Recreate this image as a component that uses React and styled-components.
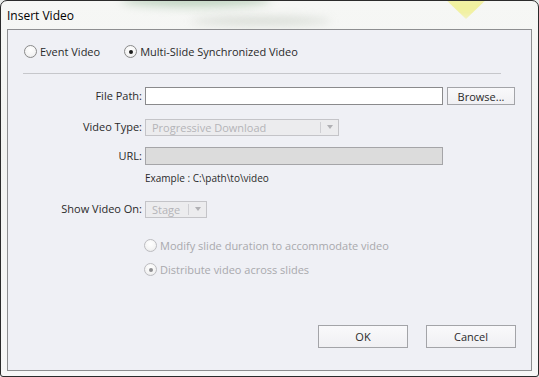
import React from 'react'
import styled, { createGlobalStyle } from 'styled-components'

const Global = createGlobalStyle`
  html, body { margin: 0; padding: 0; background: #e9ecea; }
  body { font-family: "Open Sans", "Noto Sans", sans-serif; }
`;

const Frame = styled.div`
  position: relative;
  width: 539px;
  height: 377px;
  box-sizing: border-box;
  border: 1px solid #2b2b2b;
  border-radius: 7px 7px 3px 3px;
  background: linear-gradient(180deg, #f6f7f5 0%, #f2f3f1 40%, #f7f7f7 100%);
  overflow: hidden;
  display: flex;
  flex-direction: column;
`;

const Blur = styled.div`
  position: absolute;
  filter: blur(${({ $blur }) => $blur || 6}px);
  pointer-events: none;
`;

const TitleBar = styled.div`
  position: relative;
  height: 28px;
  padding-left: 6px;
  display: flex;
  align-items: center;
  font-family: "Open Sans", "Noto Sans", sans-serif;
  font-size: 12px;
  color: #000;
`;

const Client = styled.div`
  position: relative;
  flex: 1;
  margin: 0 6px 5px 6px;
  border: 1px solid #8d8e90;
  background: #eff0f5;
  display: flex;
  flex-direction: column;
  font-size: 11px;
  color: #2a2a2a;
`;

const TopRadios = styled.div`
  display: flex;
  gap: 24px;
  padding: 14px 0 0 16px;
  height: 15px;
`;

const RadioLabel = styled.label`
  display: inline-flex;
  align-items: center;
  gap: 3px;
  color: ${({ $disabled }) => ($disabled ? '#a9a9ad' : '#2a2a2a')};
  white-space: nowrap;
`;

const RadioDot = styled.span`
  width: 11px;
  height: 11px;
  border-radius: 50%;
  border: 1px solid ${({ $disabled }) => ($disabled ? '#bcbcc0' : '#8a8a8a')};
  background: radial-gradient(circle at 50% 35%, #ffffff 0%, #f4f4f4 60%, #e2e2e4 100%);
  display: inline-flex;
  align-items: center;
  justify-content: center;
  &::after {
    content: '';
    width: 4px;
    height: 4px;
    border-radius: 50%;
    background: ${({ $disabled }) => ($disabled ? '#8f8f92' : '#1d1d1d')};
    display: ${({ $checked }) => ($checked ? 'block' : 'none')};
  }
`;

const Separator = styled.hr`
  margin: 14px 30px 0 15px;
  border: 0;
  border-top: 1px solid #c6c7cb;
  height: 0;
`;

const Form = styled.div`
  display: grid;
  grid-template-columns: 134px 1fr;
  column-gap: 3px;
  align-items: center;
  margin-top: 13px;
  padding-right: 15px;
`;

const Label = styled.div`
  text-align: right;
  height: 18px;
  line-height: 18px;
  margin-bottom: ${({ $mb }) => $mb ?? 13}px;
`;

const Field = styled.div`
  display: flex;
  align-items: center;
  gap: 4px;
  height: 18px;
  margin-bottom: ${({ $mb }) => $mb ?? 13}px;
`;

const TextBox = styled.div`
  width: ${({ $w }) => $w}px;
  height: 18px;
  box-sizing: border-box;
  border: 1px solid ${({ $disabled }) => ($disabled ? '#a5a5a8' : '#8a8a8c')};
  background: ${({ $disabled }) => ($disabled ? '#dcdcdc' : '#ffffff')};
`;

const Button = styled.button`
  width: ${({ $w }) => $w}px;
  height: ${({ $h }) => $h || 18}px;
  box-sizing: border-box;
  border: 1px solid #a3a4a8;
  background: linear-gradient(180deg, #f9f9fb 0%, #f0f0f3 100%);
  font-family: "Open Sans", "Noto Sans", sans-serif;
  font-size: 11px;
  color: #2a2a2a;
  padding: 0;
  display: flex;
  align-items: center;
  justify-content: center;
`;

const Select = styled.div`
  width: ${({ $w }) => $w}px;
  height: 17px;
  box-sizing: border-box;
  border: 1px solid #c4c4c8;
  background: #ececee;
  display: flex;
  align-items: center;
  color: #b4b4b8;
  padding-left: 6px;
`;

const SelectText = styled.span`
  flex: 1;
`;

const SelectArrow = styled.span`
  width: 17px;
  height: 11px;
  border-left: 1px solid #cfcfd3;
  display: flex;
  align-items: center;
  justify-content: center;
  &::after {
    content: '';
    border-left: 3px solid transparent;
    border-right: 3px solid transparent;
    border-top: 4px solid #b0b0b4;
  }
`;

const Hint = styled.div`
  grid-column: 2;
  font-size: 10px;
  line-height: 14px;
  margin-bottom: 15px;
`;

const SubOptions = styled.div`
  display: flex;
  flex-direction: column;
  gap: 9px;
  padding-left: 136px;
  margin-top: 20px;
`;

const Footer = styled.div`
  display: flex;
  justify-content: flex-end;
  gap: 18px;
  margin-top: auto;
  padding: 0 15px 22px 0;
`;

function Radio({ children, checked, disabled }) {
  return (
    <RadioLabel $disabled={disabled}>
      <RadioDot $checked={checked} $disabled={disabled} />
      {children}
    </RadioLabel>
  );
}

export default function App() {
  return (
    <>
      <Global />
      <Frame>
        <Blur $blur={5} style={{ left: 120, top: -8, width: 150, height: 14, background: '#8fb592', borderRadius: '50%', opacity: 0.5 }} />
        <Blur $blur={5} style={{ left: 190, top: 16, width: 140, height: 8, background: '#c9cfc6', borderRadius: '50%', opacity: 0.7 }} />
        <Blur $blur={4} style={{ left: 440, top: -6, width: 50, height: 24, background: '#f0ef8a', clipPath: 'polygon(0 0, 100% 0, 50% 100%)', opacity: 0.8 }} />
        <TitleBar>Insert Video</TitleBar>
        <Client>
          <TopRadios>
            <Radio>Event Video</Radio>
            <Radio checked>Multi-Slide Synchronized Video</Radio>
          </TopRadios>
          <Separator />
          <Form>
            <Label>File Path:</Label>
            <Field>
              <TextBox $w={298} />
              <Button $w={68}>Browse...</Button>
            </Field>
            <Label $mb={11}>Video Type:</Label>
            <Field $mb={11}>
              <Select $w={194}>
                <SelectText>Progressive Download</SelectText>
                <SelectArrow />
              </Select>
            </Field>
            <Label $mb={6}>URL:</Label>
            <Field $mb={6}>
              <TextBox $w={298} $disabled />
            </Field>
            <Hint>Example : C:\path\to\video</Hint>
            <Label $mb={0}>Show Video On:</Label>
            <Field $mb={0}>
              <Select $w={62}>
                <SelectText>Stage</SelectText>
                <SelectArrow />
              </Select>
            </Field>
          </Form>
          <SubOptions>
            <Radio disabled>Modify slide duration to accommodate video</Radio>
            <Radio disabled checked>Distribute video across slides</Radio>
          </SubOptions>
          <Footer>
            <Button $w={90} $h={23}>OK</Button>
            <Button $w={90} $h={23}>Cancel</Button>
          </Footer>
        </Client>
      </Frame>
    </>
  );
}
